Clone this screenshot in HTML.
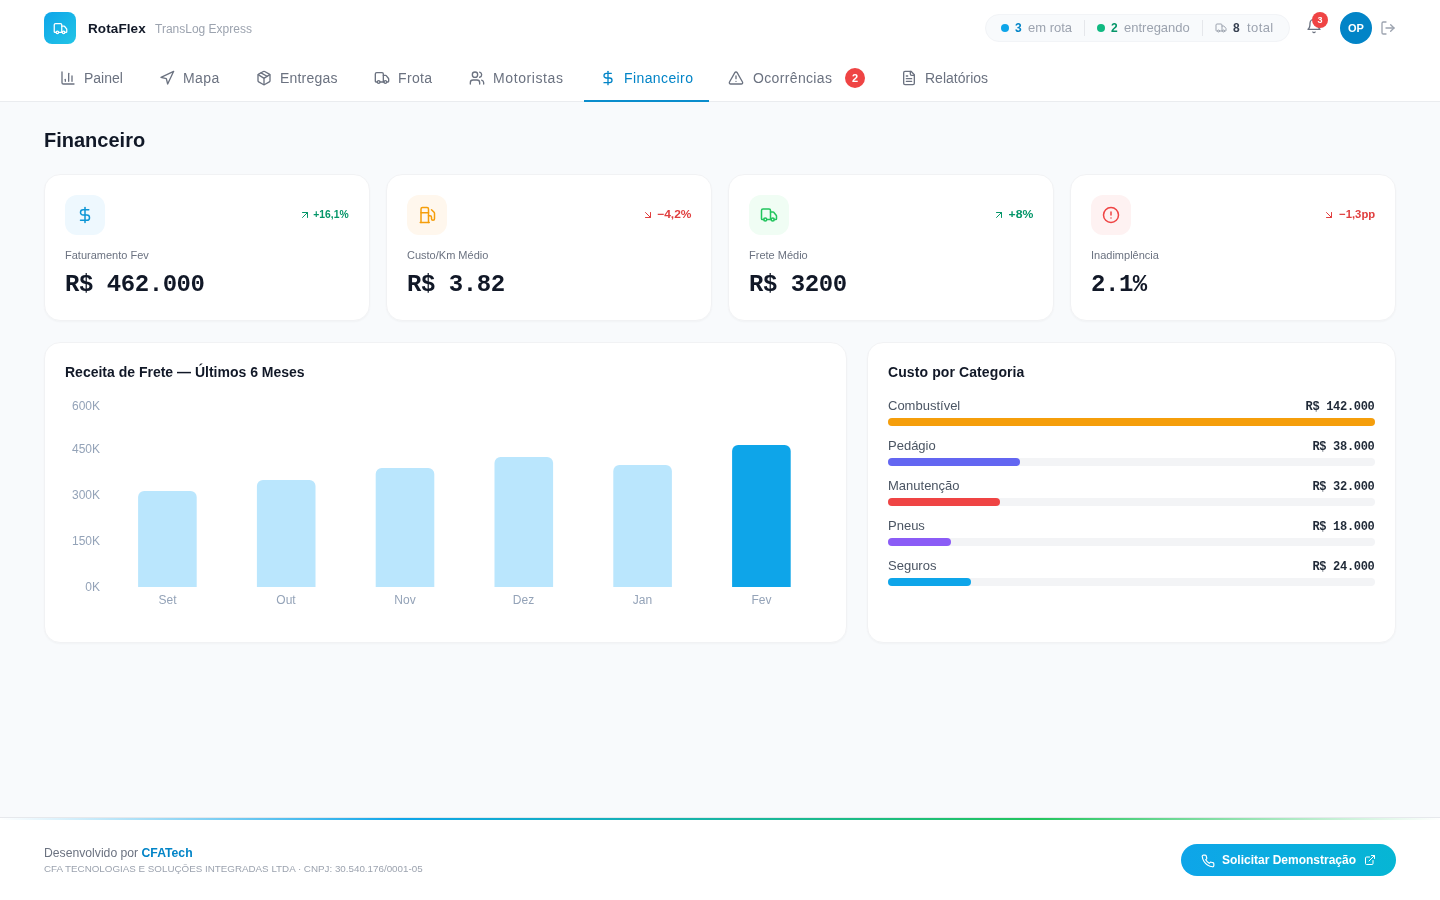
<!DOCTYPE html>
<html lang="pt-BR">
<head>
<meta charset="utf-8">
<title>RotaFlex — Financeiro</title>
<style>
*{box-sizing:border-box;margin:0;padding:0}
html,body{width:1440px;height:900px;overflow:hidden}
body{background:#f8fafc;font-family:"Liberation Sans",sans-serif;color:#111827;position:relative}
.a{position:absolute;line-height:1;white-space:nowrap}
.mono{font-family:"Liberation Mono",monospace}
svg.i{position:absolute;fill:none;stroke:currentColor;stroke-width:2;stroke-linecap:round;stroke-linejoin:round}
#hdr{position:absolute;left:0;top:0;width:1440px;height:102px;background:#fff;border-bottom:1px solid #eaecef}
.logo{position:absolute;left:44px;top:12px;width:32px;height:32px;border-radius:8px;background:linear-gradient(135deg,#0ea5e9,#22c5e6)}
.pill{position:absolute;left:985px;top:14px;width:305px;height:28px;border-radius:14px;background:#f8fafc;border:1px solid #f2f4f7}
.dot{position:absolute;width:8px;height:8px;border-radius:50%}
.vdiv{position:absolute;width:1px;height:16px;top:20px;background:#e5e7eb}
.nav{color:#6b7280;font-size:14px;font-weight:500}
.nav.act{color:#0284c7}
.card{position:absolute;background:#fff;border:1px solid #f1f2f4;border-radius:16px;box-shadow:0 1px 2px rgba(15,23,42,.03)}
.ibox{position:absolute;width:40px;height:40px;border-radius:12px}
.lbl{font-size:11px;color:#6b7280}
.val{font-family:"Liberation Mono",monospace;font-size:24px;font-weight:700;letter-spacing:-0.45px;color:#111827}
.trend{font-size:11px;font-weight:700;transform-origin:100% 50%}
.ctitle{font-size:14px;font-weight:700;color:#111827;letter-spacing:0.1px}
.clbl{font-size:13px;color:#4b5563}
.cval{font-family:"Liberation Mono",monospace;font-size:12px;font-weight:700;letter-spacing:-0.3px;color:#1f2937}
.track{position:absolute;left:888px;width:487px;height:8px;border-radius:4px;background:#f3f4f6}
.fill{position:absolute;left:0;top:0;height:8px;border-radius:4px}
#ftr{position:absolute;left:0;top:817px;width:1440px;height:83px;background:#fff;border-top:1px solid #e6e8ec}
.gl{position:absolute;left:0;top:0;width:1440px;height:2px;background:linear-gradient(90deg,rgba(14,165,233,0) 0%,#0ea5e9 28%,#22c55e 72%,rgba(34,197,94,0) 100%)}
.btn{position:absolute;left:1181px;top:844px;width:215px;height:32px;border-radius:16px;background:linear-gradient(90deg,#0ea5e9,#06b6d4)}
</style>
</head>
<body><div id="wrap" style="position:absolute;left:0;top:0;width:1440px;height:900px;will-change:transform">

<!-- HEADER -->
<div id="hdr"></div>
<div class="logo"></div>
<svg class="i" style="left:53.1px;top:21.1px;color:#fff" width="15" height="15" viewBox="0 0 24 24"><path d="M14 18V6a2 2 0 0 0-2-2H4a2 2 0 0 0-2 2v11a1 1 0 0 0 1 1h2"/><path d="M15 18H9"/><path d="M19 18h2a1 1 0 0 0 1-1v-3.65a1 1 0 0 0-.22-.624l-3.48-4.35A1 1 0 0 0 17.52 8H14"/><circle cx="17" cy="18" r="2"/><circle cx="7" cy="18" r="2"/></svg>
<div class="a" style="left:88px;top:21.6px;font-size:13.5px;font-weight:700;letter-spacing:0.1px;color:#111827">RotaFlex</div>
<div class="a" style="left:155px;top:22.6px;font-size:12px;color:#9ca3af">TransLog Express</div>

<div class="pill"></div>
<div class="dot" style="left:1001px;top:24px;background:#0ea5e9"></div>
<div class="a" style="left:1015px;top:21.8px;font-size:12px;font-weight:700;color:#0284c7">3</div>
<div class="a" style="left:1028px;top:21px;font-size:13px;color:#9ca3af">em rota</div>
<div class="vdiv" style="left:1084px"></div>
<div class="dot" style="left:1097px;top:24px;background:#10b981"></div>
<div class="a" style="left:1111px;top:21.8px;font-size:12px;font-weight:700;color:#059669">2</div>
<div class="a" style="left:1124px;top:21px;font-size:13px;color:#9ca3af">entregando</div>
<div class="vdiv" style="left:1202px"></div>
<svg class="i" style="left:1215px;top:22px;color:#9ca3af" width="12" height="12" viewBox="0 0 24 24"><path d="M14 18V6a2 2 0 0 0-2-2H4a2 2 0 0 0-2 2v11a1 1 0 0 0 1 1h2"/><path d="M15 18H9"/><path d="M19 18h2a1 1 0 0 0 1-1v-3.65a1 1 0 0 0-.22-.624l-3.48-4.35A1 1 0 0 0 17.52 8H14"/><circle cx="17" cy="18" r="2"/><circle cx="7" cy="18" r="2"/></svg>
<div class="a" style="left:1233px;top:21.8px;font-size:12px;font-weight:700;color:#374151">8</div>
<div class="a" style="left:1247px;top:21px;font-size:13px;letter-spacing:0.4px;color:#9ca3af">total</div>

<svg class="i" style="left:1306px;top:18px;color:#6b7280" width="16" height="16" viewBox="0 0 24 24"><path d="M6 8a6 6 0 0 1 12 0c0 7 3 9 3 9H3s3-2 3-9"/><path d="M10.3 21a1.94 1.94 0 0 0 3.4 0"/></svg>
<div class="a" style="left:1312px;top:12px;width:16px;height:16px;border-radius:50%;background:#ef4444;color:#fff;font-size:9px;font-weight:700;text-align:center;line-height:16px">3</div>
<div class="a" style="left:1340px;top:12px;width:32px;height:32px;border-radius:50%;background:#0284c7;color:#fff;font-size:11px;font-weight:700;text-align:center;line-height:32px">OP</div>
<svg class="i" style="left:1380px;top:20px;color:#9ca3af" width="16" height="16" viewBox="0 0 24 24"><path d="M9 21H5a2 2 0 0 1-2-2V5a2 2 0 0 1 2-2h4"/><polyline points="16 17 21 12 16 7"/><line x1="21" x2="9" y1="12" y2="12"/></svg>

<!-- NAV -->
<svg class="i" style="left:60px;top:70px;color:#6b7280" width="16" height="16" viewBox="0 0 24 24"><path d="M3 3v16a2 2 0 0 0 2 2h16"/><path d="M18 17V9"/><path d="M13 17V5"/><path d="M8 17v-3"/></svg>
<div class="a nav" style="left:84px;top:71.2px">Painel</div>
<svg class="i" style="left:159px;top:70px;color:#6b7280" width="16" height="16" viewBox="0 0 24 24"><polygon points="3 11 22 2 13 21 11 13 3 11"/></svg>
<div class="a nav" style="left:183px;top:71.2px;letter-spacing:0.4px">Mapa</div>
<svg class="i" style="left:256px;top:70px;color:#6b7280" width="16" height="16" viewBox="0 0 24 24"><path d="M11 21.73a2 2 0 0 0 2 0l7-4A2 2 0 0 0 21 16V8a2 2 0 0 0-1-1.73l-7-4a2 2 0 0 0-2 0l-7 4A2 2 0 0 0 3 8v8a2 2 0 0 0 1 1.73z"/><path d="M12 22V12"/><path d="m3.3 7 7.703 4.734a2 2 0 0 0 1.994 0L20.7 7"/><path d="m7.5 4.27 9 5.15"/></svg>
<div class="a nav" style="left:280px;top:71.2px;letter-spacing:0.2px">Entregas</div>
<svg class="i" style="left:374px;top:70px;color:#6b7280" width="16" height="16" viewBox="0 0 24 24"><path d="M14 18V6a2 2 0 0 0-2-2H4a2 2 0 0 0-2 2v11a1 1 0 0 0 1 1h2"/><path d="M15 18H9"/><path d="M19 18h2a1 1 0 0 0 1-1v-3.65a1 1 0 0 0-.22-.624l-3.48-4.35A1 1 0 0 0 17.52 8H14"/><circle cx="17" cy="18" r="2"/><circle cx="7" cy="18" r="2"/></svg>
<div class="a nav" style="left:398px;top:71.2px;letter-spacing:0.35px">Frota</div>
<svg class="i" style="left:469px;top:70px;color:#6b7280" width="16" height="16" viewBox="0 0 24 24"><path d="M16 21v-2a4 4 0 0 0-4-4H6a4 4 0 0 0-4 4v2"/><circle cx="9" cy="7" r="4"/><path d="M22 21v-2a4 4 0 0 0-3-3.87"/><path d="M16 3.13a4 4 0 0 1 0 7.75"/></svg>
<div class="a nav" style="left:493px;top:71.2px;letter-spacing:0.6px">Motoristas</div>
<svg class="i" style="left:600px;top:70px;color:#0284c7" width="16" height="16" viewBox="0 0 24 24"><line x1="12" x2="12" y1="2" y2="22"/><path d="M17 5H9.5a3.5 3.5 0 0 0 0 7h5a3.5 3.5 0 0 1 0 7H6"/></svg>
<div class="a nav act" style="left:624px;top:71.2px;letter-spacing:0.4px">Financeiro</div>
<div class="a" style="left:584px;top:100px;width:125px;height:2px;background:#0a8dcc"></div>
<svg class="i" style="left:728.4px;top:70px;color:#6b7280" width="16" height="16" viewBox="0 0 24 24"><path d="m21.73 18-8-14a2 2 0 0 0-3.48 0l-8 14A2 2 0 0 0 4 21h16a2 2 0 0 0 1.73-3"/><path d="M12 9v4"/><path d="M12 17h.01"/></svg>
<div class="a nav" style="left:753px;top:71.2px;letter-spacing:0.35px">Ocorrências</div>
<div class="a" style="left:845px;top:68px;width:20px;height:20px;border-radius:50%;background:#ef4444;color:#fff;font-size:11px;font-weight:700;text-align:center;line-height:20px">2</div>
<svg class="i" style="left:901px;top:70px;color:#6b7280" width="16" height="16" viewBox="0 0 24 24"><path d="M15 2H6a2 2 0 0 0-2 2v16a2 2 0 0 0 2 2h12a2 2 0 0 0 2-2V7Z"/><path d="M14 2v4a2 2 0 0 0 2 2h4"/><path d="M10 9H8"/><path d="M16 13H8"/><path d="M16 17H8"/></svg>
<div class="a nav" style="left:925px;top:71.2px">Relatórios</div>

<!-- TITLE -->
<div class="a" style="left:44px;top:129.9px;font-size:20px;font-weight:700;color:#111827">Financeiro</div>

<!-- KPI CARDS -->
<div class="card" style="left:44px;top:174px;width:326px;height:147px"></div>
<div class="card" style="left:386px;top:174px;width:326px;height:147px"></div>
<div class="card" style="left:728px;top:174px;width:326px;height:147px"></div>
<div class="card" style="left:1070px;top:174px;width:326px;height:147px"></div>

<div class="ibox" style="left:65px;top:195px;background:#eef8fe"></div>
<svg class="i" style="left:76px;top:206px;color:#0b95d5" width="18" height="18" viewBox="0 0 24 24"><line x1="12" x2="12" y1="2" y2="22"/><path d="M17 5H9.5a3.5 3.5 0 0 0 0 7h5a3.5 3.5 0 0 1 0 7H6"/></svg>
<div class="a trend" style="right:1091px;top:209px;transform:scaleX(0.94);color:#059669">+16,1%</div>
<svg class="i" style="left:298.7;top:209px;color:#059669" width="12" height="12" viewBox="0 0 24 24"><path d="M7 7h10v10"/><path d="M7 17 17 7"/></svg>
<div class="a lbl" style="left:65px;top:249.6px">Faturamento Fev</div>
<div class="a val" style="left:65px;top:273.3px">R$ 462.000</div>

<div class="ibox" style="left:407px;top:195px;background:#fff7ed"></div>
<svg class="i" style="left:418px;top:206px;color:#f59e0b" width="18" height="18" viewBox="0 0 24 24"><line x1="3" x2="15" y1="22" y2="22"/><line x1="4" x2="14" y1="9" y2="9"/><path d="M14 22V4a2 2 0 0 0-2-2H6a2 2 0 0 0-2 2v18"/><path d="M14 13h2a2 2 0 0 1 2 2v2a2 2 0 0 0 2 2a2 2 0 0 0 2-2V9.83a2 2 0 0 0-.59-1.42L18 5"/></svg>
<div class="a trend" style="right:749px;top:209px;transform:scaleX(1.09);color:#e03e3e">−4,2%</div>
<svg class="i" style="left:641.5;top:209px;color:#e03e3e" width="12" height="12" viewBox="0 0 24 24"><path d="m7 7 10 10"/><path d="M17 7v10H7"/></svg>
<div class="a lbl" style="left:407px;top:249.6px">Custo/Km Médio</div>
<div class="a val" style="left:407px;top:273.3px">R$ 3.82</div>

<div class="ibox" style="left:749px;top:195px;background:#f0fdf4"></div>
<svg class="i" style="left:760px;top:206px;color:#22c55e" width="18" height="18" viewBox="0 0 24 24"><path d="M14 18V6a2 2 0 0 0-2-2H4a2 2 0 0 0-2 2v11a1 1 0 0 0 1 1h2"/><path d="M15 18H9"/><path d="M19 18h2a1 1 0 0 0 1-1v-3.65a1 1 0 0 0-.22-.624l-3.48-4.35A1 1 0 0 0 17.52 8H14"/><circle cx="17" cy="18" r="2"/><circle cx="7" cy="18" r="2"/></svg>
<div class="a trend" style="right:407px;top:209px;transform:scaleX(1.11);color:#059669">+8%</div>
<svg class="i" style="left:993.3;top:209px;color:#059669" width="12" height="12" viewBox="0 0 24 24"><path d="M7 7h10v10"/><path d="M7 17 17 7"/></svg>
<div class="a lbl" style="left:749px;top:249.6px">Frete Médio</div>
<div class="a val" style="left:749px;top:273.3px">R$ 3200</div>

<div class="ibox" style="left:1091px;top:195px;background:#fef2f2"></div>
<svg class="i" style="left:1102px;top:206px;color:#ef4444" width="18" height="18" viewBox="0 0 24 24"><circle cx="12" cy="12" r="10"/><line x1="12" x2="12" y1="8" y2="12"/><line x1="12" x2="12.01" y1="16" y2="16"/></svg>
<div class="a trend" style="right:65px;top:209px;transform:scaleX(1.025);color:#e03e3e">−1,3pp</div>
<svg class="i" style="left:1323.3;top:209px;color:#e03e3e" width="12" height="12" viewBox="0 0 24 24"><path d="m7 7 10 10"/><path d="M17 7v10H7"/></svg>
<div class="a lbl" style="left:1091px;top:249.6px">Inadimplência</div>
<div class="a val" style="left:1091px;top:273.3px">2.1%</div>

<!-- CHART CARD -->
<div class="card" style="left:44px;top:342px;width:803px;height:301px"></div>
<div class="a ctitle" style="left:65px;top:365px;letter-spacing:0">Receita de Frete — Últimos 6 Meses</div>
<div class="a" style="right:1340px;top:400.3px;font-size:12px;color:#94a3b8">600K</div>
<div class="a" style="right:1340px;top:443.4px;font-size:12px;color:#94a3b8">450K</div>
<div class="a" style="right:1340px;top:489.4px;font-size:12px;color:#94a3b8">300K</div>
<div class="a" style="right:1340px;top:535.4px;font-size:12px;color:#94a3b8">150K</div>
<div class="a" style="right:1340px;top:581.4px;font-size:12px;color:#94a3b8">0K</div>
<svg style="position:absolute;left:0;top:0" width="1440" height="900">
<path fill="#bae6fd" d="M138.1 587V497a6 6 0 0 1 6-6h46.6a6 6 0 0 1 6 6V587Z"/>
<path fill="#bae6fd" d="M256.9 587V486a6 6 0 0 1 6-6h46.6a6 6 0 0 1 6 6V587Z"/>
<path fill="#bae6fd" d="M375.7 587V474a6 6 0 0 1 6-6h46.6a6 6 0 0 1 6 6V587Z"/>
<path fill="#bae6fd" d="M494.5 587V463a6 6 0 0 1 6-6h46.6a6 6 0 0 1 6 6V587Z"/>
<path fill="#bae6fd" d="M613.3 587V471a6 6 0 0 1 6-6h46.6a6 6 0 0 1 6 6V587Z"/>
<path fill="#0ea5e9" d="M732.1 587V451a6 6 0 0 1 6-6h46.6a6 6 0 0 1 6 6V587Z"/>
</svg>
<div class="a" style="left:117.5px;width:100px;text-align:center;top:593.8px;font-size:12px;color:#94a3b8">Set</div>
<div class="a" style="left:236px;width:100px;text-align:center;top:593.8px;font-size:12px;color:#94a3b8">Out</div>
<div class="a" style="left:355px;width:100px;text-align:center;top:593.8px;font-size:12px;color:#94a3b8">Nov</div>
<div class="a" style="left:473.5px;width:100px;text-align:center;top:593.8px;font-size:12px;color:#94a3b8">Dez</div>
<div class="a" style="left:592.5px;width:100px;text-align:center;top:593.8px;font-size:12px;color:#94a3b8">Jan</div>
<div class="a" style="left:711.5px;width:100px;text-align:center;top:593.8px;font-size:12px;color:#94a3b8">Fev</div>

<!-- CATEGORY CARD -->
<div class="card" style="left:867px;top:342px;width:529px;height:301px"></div>
<div class="a ctitle" style="left:888px;top:365px">Custo por Categoria</div>

<div class="a clbl" style="left:888px;top:398.5px">Combustível</div>
<div class="a cval" style="right:65.5px;top:401.0px">R$ 142.000</div>
<div class="track" style="top:418px"><div class="fill" style="width:487px;background:#f59e0b"></div></div>

<div class="a clbl" style="left:888px;top:438.5px">Pedágio</div>
<div class="a cval" style="right:65.5px;top:441.0px">R$ 38.000</div>
<div class="track" style="top:458px"><div class="fill" style="width:132px;background:#6366f1"></div></div>

<div class="a clbl" style="left:888px;top:478.5px">Manutenção</div>
<div class="a cval" style="right:65.5px;top:481.0px">R$ 32.000</div>
<div class="track" style="top:498px"><div class="fill" style="width:112px;background:#ef4444"></div></div>

<div class="a clbl" style="left:888px;top:518.5px">Pneus</div>
<div class="a cval" style="right:65.5px;top:521.0px">R$ 18.000</div>
<div class="track" style="top:538px"><div class="fill" style="width:63px;background:#8b5cf6"></div></div>

<div class="a clbl" style="left:888px;top:558.5px">Seguros</div>
<div class="a cval" style="right:65.5px;top:561.0px">R$ 24.000</div>
<div class="track" style="top:578px"><div class="fill" style="width:83px;background:#0ea5e9"></div></div>

<!-- FOOTER -->
<div id="ftr"><div class="gl"></div></div>
<div class="a" style="left:44px;top:846.7px;font-size:12.2px;color:#6b7280">Desenvolvido por <b style="color:#0284c7">CFATech</b></div>
<div class="a" style="left:44px;top:864px;font-size:9.8px;color:#9ca3af">CFA TECNOLOGIAS E SOLUÇÕES INTEGRADAS LTDA · CNPJ: 30.540.176/0001-05</div>
<div class="btn"></div>
<svg class="i" style="left:1201px;top:854px;color:#fff" width="14" height="14" viewBox="0 0 24 24"><path d="M22 16.92v3a2 2 0 0 1-2.18 2 19.79 19.79 0 0 1-8.630-3.07 19.5 19.5 0 0 1-6-6 19.79 19.79 0 0 1-3.07-8.67A2 2 0 0 1 4.11 2h3a2 2 0 0 1 2 1.72 12.84 12.84 0 0 0 .7 2.81 2 2 0 0 1-.45 2.11L8.09 9.91a16 16 0 0 0 6 6l1.27-1.27a2 2 0 0 1 2.11-.45 12.840 12.84 0 0 0 2.81.7A2 2 0 0 1 22 16.92z"/></svg>
<div class="a" style="left:1222px;top:854.3px;font-size:12px;font-weight:700;color:#fff">Solicitar Demonstração</div>
<svg class="i" style="left:1364px;top:854px;color:#fff" width="12" height="12" viewBox="0 0 24 24"><path d="M15 3h6v6"/><path d="M10 14 21 3"/><path d="M18 13v6a2 2 0 0 1-2 2H5a2 2 0 0 1-2-2V8a2 2 0 0 1 2-2h6"/></svg>


</div></body>
</html>
